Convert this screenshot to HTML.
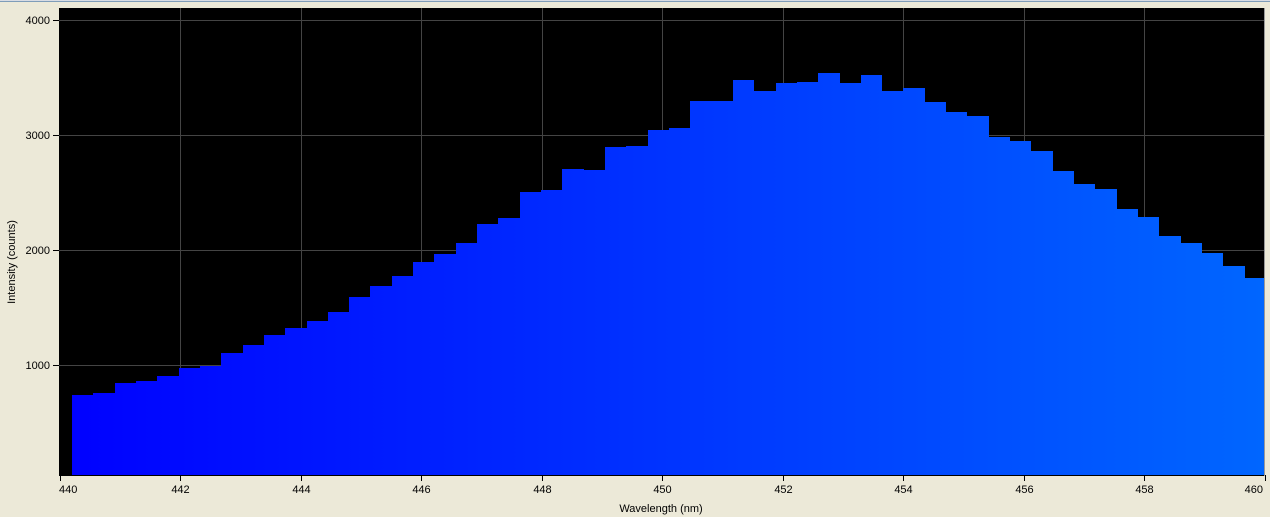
<!DOCTYPE html>
<html><head><style>
body{margin:0;width:1270px;height:517px;background:#ece9d8;overflow:hidden;font-family:"Liberation Sans",sans-serif;}
</style></head><body>
<svg id="s" width="1270" height="517" xmlns="http://www.w3.org/2000/svg" style="position:absolute;left:0;top:0">
<defs><linearGradient id="g" x1="59" x2="1264" y1="0" y2="0" gradientUnits="userSpaceOnUse"><stop offset="0" stop-color="#0000ff"/><stop offset="1" stop-color="#0066ff"/></linearGradient></defs>
<rect x="0" y="0" width="1270" height="1" fill="#d8dce4"/>
<rect x="0" y="1" width="1270" height="1" fill="#7f9db9"/>
<rect x="59" y="8" width="1205" height="467" fill="#000"/>
<g stroke="#444" stroke-width="1" id="grid"></g>
<g id="bars" fill="url(#g)"></g>
<line x1="59" y1="475.5" x2="1265" y2="475.5" stroke="#000"/>
<line x1="1264.5" y1="8" x2="1264.5" y2="476" stroke="#999"/>
<g id="ax" font-size="11" fill="#000"></g>
<text x="661" y="512" font-size="11" text-anchor="middle">Wavelength (nm)</text>
<text transform="translate(15,262) rotate(-90)" font-size="11" text-anchor="middle">Intensity (counts)</text>
</svg>
<script>
var NS="http://www.w3.org/2000/svg";
function el(p,t,a,txt){var e=document.createElementNS(NS,t);for(var k in a)e.setAttribute(k,a[k]);if(txt)e.textContent=txt;p.appendChild(e);}
var grid=document.getElementById('grid'),ax=document.getElementById('ax'),bars=document.getElementById('bars');
for(var i=0;i<=10;i++){var x=Math.round(59.5+i*120.5)+0.5;if(i>0&&i<10)el(grid,'line',{x1:x,y1:8,x2:x,y2:475});
el(ax,'line',{x1:x,y1:475,x2:x,y2:481,stroke:'#000'});
var a={x:x,y:493,'text-anchor':'middle'};if(i==0){a.x=59;a['text-anchor']='start';}if(i==10){a.x=1263;a['text-anchor']='end';}
el(ax,'text',a,String(440+2*i));}
[[4000,20],[3000,135],[2000,250],[1000,365]].forEach(function(v){var y=v[1]+0.5;el(grid,'line',{x1:59,y1:y,x2:1264,y2:y});
el(ax,'line',{x1:53,y1:y,x2:59,y2:y,stroke:'#000'});el(ax,'text',{x:50,y:v[1]+4,'text-anchor':'end'},String(v[0]));});
var tops=[395,393,383,381,376,368,366,353,345,335,328,321,312,297,286,276,262,254,243,224,218,192,190,169,170,147,146,130,128,101,101,80,91,83,82,73,83,75,91,88,102,112,116,137,141,151,171,184,189,209,217,236,243,253,266,278];
for(var i=0;i<tops.length;i++){var x0=Math.round(72+i*21.32),x1=i==tops.length-1?1264:Math.round(72+(i+1)*21.32);
el(bars,'rect',{x:x0,y:tops[i],width:x1-x0,height:475-tops[i]});}
</script>
</body></html>
